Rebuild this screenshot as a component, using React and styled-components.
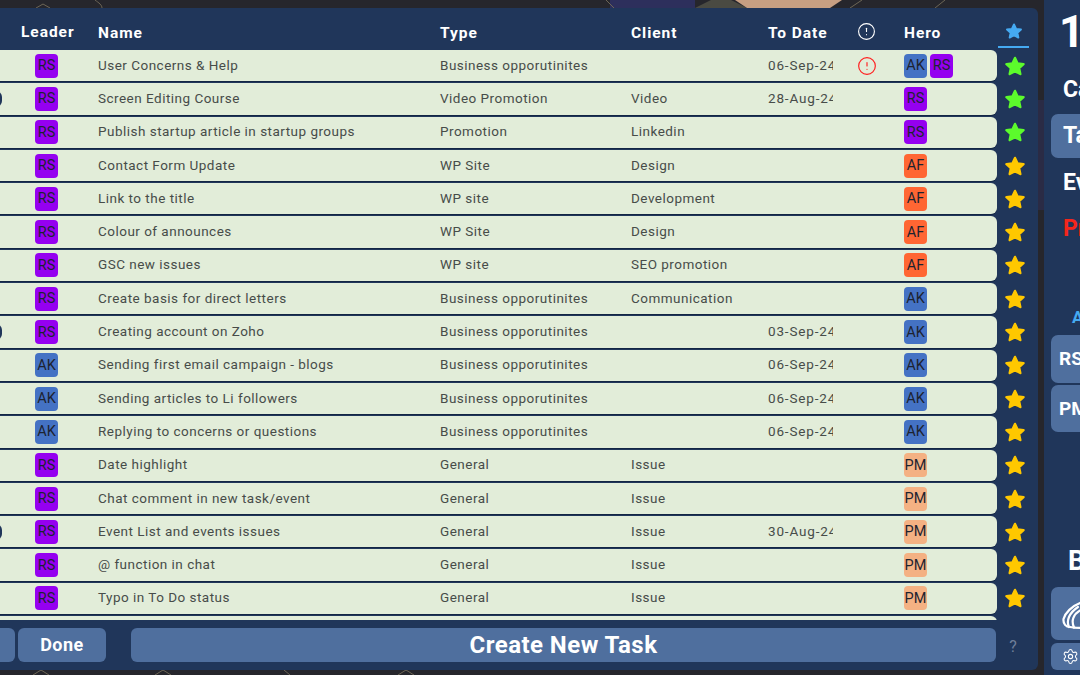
import React from 'react';
import styled, { createGlobalStyle } from 'styled-components';
import { CircleAlert, Settings } from 'lucide-react';

const GlobalStyle = createGlobalStyle`
  html, body {
    margin: 0;
    height: 100%;
    overflow: hidden;
    background: #26262c;
  }
  #root {
    height: 100%;
  }
`;

const Page = styled.div`
  position: relative;
  width: 1080px;
  height: 675px;
  overflow: hidden;
  display: grid;
  grid-template-columns: 1038px 120px;
  grid-template-rows: 675px;
  column-gap: 6px;
  font-family: Roboto, sans-serif;
`;

const Backdrop = styled.svg`
  position: absolute;
  inset: 0;
  width: 1080px;
  height: 675px;
`;

const Panel = styled.main`
  position: relative;
  margin: 8px 0 5px -40px;
  background: #20365a;
  border-radius: 6px;
  display: flex;
  flex-direction: column;
  min-height: 0;
`;

const columns = '65px 63px 342px 191px 137px 90px 46px 93px';

const HeaderRow = styled.div`
  height: 42px;
  flex: none;
  display: grid;
  grid-template-columns: ${columns} 35px;
  align-items: center;
  padding-left: 10px;
  color: #fff;
  font-weight: 700;
  font-size: 15.5px;
  letter-spacing: 0.95px;
`;

const HeadLabel = styled.span`
  padding-top: 7px;
`;

const LeaderHead = styled(HeadLabel)`
  margin-left: -14px;
  padding-top: 5px;
`;

const StarHead = styled.div`
  width: 31px;
  height: 40px;
  margin-left: 1px;
  padding-top: 7px;
  box-sizing: border-box;
  border-bottom: 2px solid #45aaf2;
  display: flex;
  align-items: center;
  justify-content: center;
  align-self: start;
`;

const Body = styled.div`
  flex: 1;
  min-height: 0;
  overflow: hidden;
  display: grid;
  grid-template-columns: 1fr;
  grid-auto-rows: 31.31px;
  row-gap: 2px;
  padding-left: 10px;
  align-content: start;
`;

const RowLine = styled.div`
  display: grid;
  grid-template-columns: 1027px 35px;
  align-items: center;
`;

const Row = styled.div`
  height: 31.31px;
  display: grid;
  grid-template-columns: ${columns};
  align-items: center;
  background: #e2edd9;
  border-radius: 0 6px 6px 0;
  box-shadow: 0 1px 0 #132644;
  color: #474c49;
  font-size: 13.5px;
  letter-spacing: 0.48px;
  white-space: nowrap;
`;

const Cell = styled.span`
  display: block;
  margin-top: -2px;
`;

const Lead = styled.div`
  display: flex;
  justify-content: flex-end;
  padding-right: 33px;
`;

const Pill = styled.span`
  width: 14px;
  height: 16px;
  box-sizing: border-box;
  border: 2px solid #20365a;
  border-radius: 6px;
`;

const DateCell = styled(Cell)`
  width: 65px;
  overflow: hidden;
  letter-spacing: 0.85px;
`;

const Badges = styled.div`
  display: flex;
  gap: 3px;
`;

const Badge = styled.span`
  width: 23px;
  height: 24px;
  display: flex;
  align-items: center;
  justify-content: center;
  border-radius: 4px;
  font-size: 14.5px;
  letter-spacing: 0;
  color: #1d2330;
  background: ${p => p.$bg};
`;

const AlertCell = styled.div`
  display: flex;
  margin-left: -1px;
  padding-top: ${p => (p.$head ? '5px' : '0')};
  color: ${p => (p.$head ? '#fff' : '#ff1f1f')};
`;

const StarCell = styled.div`
  display: flex;
  justify-content: center;
`;

const Footer = styled.div`
  flex: none;
  height: 50px;
  display: grid;
  grid-template-columns: 55px 91px 25px 865px 1fr;
  align-items: start;
  padding-top: 8px;
  box-sizing: border-box;
`;

const FootButton = styled.button`
  height: 34px;
  border: 0;
  padding: 0;
  margin-left: ${p => (p.$done ? '3px' : '0')};
  border-radius: 6px;
  background: #4f6f9e;
  color: #fff;
  font-family: inherit;
  font-weight: 700;
  font-size: ${p => (p.$big ? '24px' : '18px')};
  letter-spacing: ${p => (p.$big ? '0.45px' : '0.5px')};
  line-height: 1;
`;

const Gap = styled.span``;

const Help = styled.span`
  align-self: center;
  margin-top: -6px;
  padding-right: 8px;
  text-align: center;
  color: #6f7f99;
  font-size: 16px;
`;

const Side = styled.aside`
  position: relative;
  background: #20365a;
  padding: 8px 0 5px 7px;
  display: flex;
  flex-direction: column;
  color: #fff;
  font-weight: 700;
`;

const Clock = styled.div`
  height: 59px;
  font-size: 44px;
  line-height: 48px;
  padding-left: 8px;
`;

const NavItem = styled.div`
  height: 44px;
  width: 100px;
  margin-bottom: 2.5px;
  display: flex;
  align-items: center;
  padding-left: 12px;
  box-sizing: border-box;
  border-radius: 7px;
  font-size: 23px;
  color: ${p => (p.$red ? '#f4261c' : '#fff')};
  background: ${p => (p.$active ? '#4f6f9e' : 'transparent')};
`;

const SideLabel = styled.div`
  height: 30px;
  display: flex;
  align-items: center;
  color: ${p => p.$color || '#fff'};
`;

const AwayLabel = styled(SideLabel)`
  margin: 49px 0 3px;
  padding-left: 21px;
  font-size: 17px;
`;

const BottomLabel = styled(SideLabel)`
  padding-left: 17px;
  font-size: 27px;
`;

const PersonButton = styled.div`
  width: 100px;
  height: 47.5px;
  margin-bottom: 2px;
  border-radius: 7px;
  background: #4f6f9e;
  display: flex;
  align-items: center;
  padding-left: 8px;
  box-sizing: border-box;
  font-size: 19px;
`;

const Spacer = styled.div`
  flex: 1;
`;

const LogoButton = styled.div`
  width: 100px;
  height: 53px;
  margin-top: 11px;
  margin-bottom: 3px;
  border-radius: 7px;
  background: #4f6f9e;
  display: flex;
  align-items: center;
  padding-left: 9px;
`;

const GearButton = styled.div`
  width: 100px;
  height: 27px;
  border-radius: 6px;
  background: #4f6f9e;
  display: flex;
  align-items: center;
  padding-left: 11px;
  color: #fff;
`;

const COLORS = {
  RS: '#9500f0',
  AK: '#4472c4',
  AF: '#ff6633',
  PM: '#f4b183',
};

const tasks = [
  { lead: 'RS', name: 'User Concerns & Help', type: 'Business opporutinites', client: '', date: '06-Sep-24', alert: true, hero: ['AK', 'RS'], star: 'g' },
  { lead: 'RS', name: 'Screen Editing Course', type: 'Video Promotion', client: 'Video', date: '28-Aug-24', pill: true, hero: ['RS'], star: 'g' },
  { lead: 'RS', name: 'Publish startup article in startup groups', type: 'Promotion', client: 'Linkedin', date: '', hero: ['RS'], star: 'g' },
  { lead: 'RS', name: 'Contact Form Update', type: 'WP Site', client: 'Design', date: '', hero: ['AF'] },
  { lead: 'RS', name: 'Link to the title', type: 'WP site', client: 'Development', date: '', hero: ['AF'] },
  { lead: 'RS', name: 'Colour of announces', type: 'WP Site', client: 'Design', date: '', hero: ['AF'] },
  { lead: 'RS', name: 'GSC new issues', type: 'WP site', client: 'SEO promotion', date: '', hero: ['AF'] },
  { lead: 'RS', name: 'Create basis for direct letters', type: 'Business opporutinites', client: 'Communication', date: '', hero: ['AK'] },
  { lead: 'RS', name: 'Creating account on Zoho', type: 'Business opporutinites', client: '', date: '03-Sep-24', pill: true, hero: ['AK'] },
  { lead: 'AK', name: 'Sending first email campaign - blogs', type: 'Business opporutinites', client: '', date: '06-Sep-24', hero: ['AK'] },
  { lead: 'AK', name: 'Sending articles to Li followers', type: 'Business opporutinites', client: '', date: '06-Sep-24', hero: ['AK'] },
  { lead: 'AK', name: 'Replying to concerns or questions', type: 'Business opporutinites', client: '', date: '06-Sep-24', hero: ['AK'] },
  { lead: 'RS', name: 'Date highlight', type: 'General', client: 'Issue', date: '', hero: ['PM'] },
  { lead: 'RS', name: 'Chat comment in new task/event', type: 'General', client: 'Issue', date: '', hero: ['PM'] },
  { lead: 'RS', name: 'Event List and events issues', type: 'General', client: 'Issue', date: '30-Aug-24', pill: true, hero: ['PM'] },
  { lead: 'RS', name: '@ function in chat', type: 'General', client: 'Issue', date: '', hero: ['PM'] },
  { lead: 'RS', name: 'Typo in To Do status', type: 'General', client: 'Issue', date: '', hero: ['PM'] },
  { lead: '', name: '', type: '', client: '', date: '', hero: [] },
];

function Star({ color, size = 22 }) {
  return (
    <svg width={size} height={size} viewBox="0 0 24 24">
      <path
        d="M12 3.2l2.8 6 6.5.8-4.8 4.4 1.3 6.4-5.8-3.2-5.8 3.2 1.3-6.4-4.8-4.4 6.5-.8z"
        fill={color}
        stroke={color}
        strokeWidth="2.6"
        strokeLinejoin="round"
      />
    </svg>
  );
}

function ShellLogo() {
  return (
    <svg width="40" height="40" viewBox="0 0 40 40" fill="none" stroke="#fff" strokeWidth="2.2" strokeLinecap="round">
      <path d="M20 9C12 12 5 19 3.5 25 3 30 6 33 10 33c4 1 8 1 14 1" />
      <path d="M9 33C6 27 9 19 18 13" />
      <path d="M14 33.5C11 27 13 20 21 16" />
    </svg>
  );
}

function Background() {
  return (
    <Backdrop viewBox="0 0 1080 675">
      <rect x="610" y="0" width="85" height="8" fill="#2d2f5c" />
      <path d="M695 8l16-8h20l16 8z" fill="#4a4a42" />
      <path d="M747 8l-12-8h107l-12 8z" fill="#c79f82" />
      <g stroke="#6d6656" strokeWidth="1" fill="none">
        <path d="M36 8l7-4 7 4M95 0c4 3 7 5 7 8M606 0l8 8M850 8l12-8M935 8l10-8" />
        <path d="M33 675l8-5 8 5M155 675l8-5 8 5M284 670l6 5M398 675l8-5 8 5" />
      </g>
      <rect x="1038" y="100" width="6" height="110" fill="#2a2b45" />
    </Backdrop>
  );
}

export default function App() {
  return (
    <Page>
      <GlobalStyle />
      <Background />
      <Panel>
        <HeaderRow>
          <span />
          <LeaderHead>Leader</LeaderHead>
          <HeadLabel>Name</HeadLabel>
          <HeadLabel>Type</HeadLabel>
          <HeadLabel>Client</HeadLabel>
          <HeadLabel>To Date</HeadLabel>
          <AlertCell $head>
            <CircleAlert size={19} strokeWidth={1.4} />
          </AlertCell>
          <HeadLabel>Hero</HeadLabel>
          <StarHead>
            <Star color="#45aaf2" size={18} />
          </StarHead>
        </HeaderRow>
        <Body>
          {tasks.map((task, i) => (
            <RowLine key={i}>
              <Row>
                <Lead>{task.pill && <Pill />}</Lead>
                <div>{task.lead && <Badge $bg={COLORS[task.lead]}>{task.lead}</Badge>}</div>
                <Cell>{task.name}</Cell>
                <Cell>{task.type}</Cell>
                <Cell>{task.client}</Cell>
                <DateCell>{task.date}</DateCell>
                <AlertCell>{task.alert && <CircleAlert size={20} strokeWidth={1.4} />}</AlertCell>
                <Badges>
                  {task.hero.map(h => (
                    <Badge key={h} $bg={COLORS[h]}>{h}</Badge>
                  ))}
                </Badges>
              </Row>
              <StarCell>
                {task.name && <Star color={task.star === 'g' ? '#5cfb2c' : '#ffc800'} />}
              </StarCell>
            </RowLine>
          ))}
        </Body>
        <Footer>
          <FootButton aria-label="Previous" />
          <FootButton $done>Done</FootButton>
          <Gap />
          <FootButton $big>Create New Task</FootButton>
          <Help>?</Help>
        </Footer>
      </Panel>
      <Side>
        <Clock>1</Clock>
        <NavItem>Ca</NavItem>
        <NavItem $active>Ta</NavItem>
        <NavItem>Ev</NavItem>
        <NavItem $red>Pr</NavItem>
        <AwayLabel $color="#45aaf2">A</AwayLabel>
        <PersonButton>RS</PersonButton>
        <PersonButton>PM</PersonButton>
        <Spacer />
        <BottomLabel>B</BottomLabel>
        <LogoButton>
          <ShellLogo />
        </LogoButton>
        <GearButton>
          <Settings size={17} strokeWidth={1.5} />
        </GearButton>
      </Side>
    </Page>
  );
}
